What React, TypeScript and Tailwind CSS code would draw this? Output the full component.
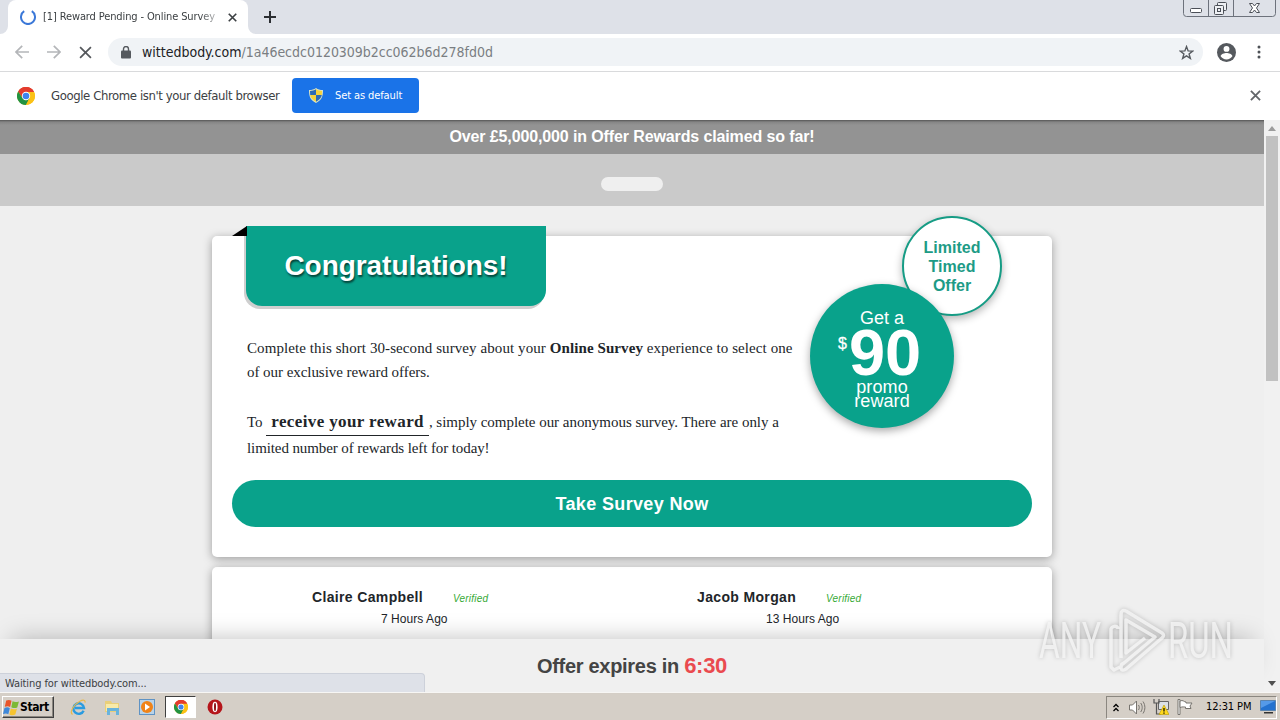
import type { ReactNode } from 'react';
import { clsx } from 'clsx';

const UI_FONT = "font-['DejaVu_Sans_Condensed','DejaVu_Sans',sans-serif] [font-stretch:condensed]";

function ChromeLogo({ size }: { size: number }) {
  return (
    <svg width={size} height={size} viewBox="0 0 24 24">
      <circle cx="12" cy="12" r="12" fill="#fbc116" />
      <path d="M12 12 1.6 6A12 12 0 0 1 22.4 6Z" fill="#e33b2e" />
      <path d="M12 6.5H22.7A12 12 0 0 0 1.6 6L7.2 14.7Z" fill="#e33b2e" />
      <path d="M1.6 6 7.2 14.8 12 17.5 16.8 14.8 12 24A12 12 0 0 1 1.6 6Z" fill="#229342" />
      <path d="M22.7 6.5H12L16.8 14.8 12 24A12 12 0 0 0 22.7 6.5Z" fill="#fbc116" />
      <circle cx="12" cy="12" r="5.6" fill="#fff" />
      <circle cx="12" cy="12" r="4.4" fill="#3f83ee" />
    </svg>
  );
}

function CloseIcon({ size, color, width = 2 }: { size: number; color: string; width?: number }) {
  return (
    <svg width={size} height={size} viewBox="0 0 12 12" fill="none" stroke={color} strokeWidth={width}>
      <path d="m1 1 10 10M11 1 1 11" />
    </svg>
  );
}

function TabStrip() {
  return (
    <div className="flex h-[34px] shrink-0 items-start bg-[#dee1e8]">
      <div className="relative ml-2 flex h-[34px] w-[240px] items-center rounded-t-lg bg-white pl-3">
        <svg className="absolute bottom-0 -left-2" width="8" height="8"><path d="M8 0v8H0a8 8 0 0 0 8-8Z" fill="#fff" /></svg>
        <svg className="absolute -right-2 bottom-0" width="8" height="8"><path d="M0 0v8h8a8 8 0 0 1-8-8Z" fill="#fff" /></svg>
        <svg width="16" height="16" viewBox="0 0 16 16" fill="none" stroke="#3b78d8" strokeWidth="2">
          <path d="M4.2 2.2A7 7 0 1 0 11.8 2.2" />
        </svg>
        <span className={clsx(UI_FONT, 'ml-[7px] w-[174px] overflow-hidden pt-px text-[11px] tracking-[-0.120px] whitespace-nowrap text-[#3c4043] [mask-image:linear-gradient(to_right,#000_90%,rgba(0,0,0,0.3))]')}>
          [1] Reward Pending - Online Survey
        </span>
        <span className="ml-[11px]"><CloseIcon size={9} color="#3c4043" width={2.2} /></span>
      </div>
      <svg className="mt-[11px] ml-4" width="12" height="12" stroke="#2b2e32" strokeWidth="2"><path d="M6 0v12M0 6h12" /></svg>
      <svg className="ml-auto mr-[4px]" width="93" height="17" fill="none" stroke="#6d727c">
        <path d="M.5 0v13.5a3 3 0 0 0 3 3h86a3 3 0 0 0 3-3V0" />
        <path d="M25.5 0v16M50.5 0v16" />
        <g stroke="#4b4f57">
          <rect x="7.5" y="8.5" width="11" height="4" rx="1" fill="#fff" />
          <rect x="34.5" y="2.5" width="9" height="8" rx="1" fill="#eef0f4" />
          <rect x="31.5" y="5.5" width="9" height="9" rx="1" fill="#eef0f4" />
          <rect x="34.5" y="8.5" width="3" height="3" />
          <path d="M66.5 3.5h3l2 2.500 2-2.500h3L73.500 8l3 4.500h-3l-2-2.500-2 2.500h-3l3-4.500Z" fill="#fff" />
        </g>
      </svg>
    </div>
  );
}

function Toolbar() {
  return (
    <div className="flex h-[38px] shrink-0 items-center border-b border-[#d9dadc] bg-white pb-px pl-[15px]">
      <svg width="14" height="14" viewBox="0 0 14 14" fill="none" stroke="#b4b6b9" strokeWidth="1.7"><path d="M14 7H1M7.200.8 1 7l6.200 6.200" /></svg>
      <svg className="ml-[18px]" width="14" height="14" viewBox="0 0 14 14" fill="none" stroke="#b4b6b9" strokeWidth="1.7"><path d="M0 7h13M6.800.8 13 7l-6.200 6.200" /></svg>
      <span className="ml-[18px]"><CloseIcon size={13} color="#55585c" width={1.6} /></span>
      <div className="ml-4 flex h-7 w-[1095px] items-center rounded-full bg-[#f0f3f6] pl-[13px]">
        <svg width="10" height="13" viewBox="0 0 10 13"><rect y="4.5" width="10" height="8" rx="1" fill="#55595e" /><path d="M2.500 5V3a2.500 2.500 0 0 1 5 0v2" fill="none" stroke="#55595e" strokeWidth="1.4" /></svg>
        <span className={clsx(UI_FONT, 'ml-[11px] text-sm whitespace-nowrap text-[#7a7e82]')}>
          <span className="text-[#202124]">wittedbody.com</span>
          <span className="tracking-[-0.020px]">/1a46ecdc0120309b2cc062b6d278fd0d</span>
        </span>
        <svg className="mr-[9px] ml-auto" width="15" height="15" viewBox="0 0 14 14" fill="none" stroke="#55595e" strokeWidth="1.3"><path d="m7 1.500 1.500 4 4.300.2-3.400 2.600 1.200 4.200L7 10.100l-3.600 2.400 1.200-4.200L1.200 5.700l4.300-.2Z" /></svg>
      </div>
      <svg className="ml-[14px]" width="19" height="19" viewBox="0 0 20 20">
        <circle cx="10" cy="10" r="10" fill="#55595e" />
        <circle cx="10" cy="6.200" r="3.100" fill="#fff" />
        <path d="M3.800 14c0-2.300 4.100-3.500 6.200-3.500s6.200 1.200 6.200 3.500A7.500 7.500 0 0 1 10 17.300 7.500 7.500 0 0 1 3.800 14Z" fill="#fff" />
      </svg>
      <svg className="ml-[21px]" width="4" height="14" fill="#4d5156"><circle cx="2" cy="2" r="1.5" /><circle cx="2" cy="7" r="1.5" /><circle cx="2" cy="12" r="1.5" /></svg>
    </div>
  );
}

function DefaultBrowserBar() {
  return (
    <div className={clsx(UI_FONT, 'flex h-12 shrink-0 items-center bg-white pr-[19px] pb-px pl-[17px]')}>
      <ChromeLogo size={18} />
      <span className="ml-4 w-[229px] text-[13px] tracking-[-0.400px] whitespace-nowrap text-[#3c4043]">Google Chrome isn't your default browser</span>
      <button className="ml-[12px] flex h-[35px] w-[127px] items-center rounded bg-[#1a73e8] pl-[17px] text-[11px] text-white">
        <svg width="14" height="15" viewBox="0 0 14 15">
          <path d="M7 0c2 1.400 4 2 7 2 0 6-1 10-7 13C1 12 0 8 0 2c3 0 5-.6 7-2Z" fill="#dbe4c4" />
          <path d="M7 1.300V7H1.200L1 3c2.400 0 4-.5 6-1.700Z" fill="#2d6bb5" />
          <path d="M7 1.300V7h5.800l.2-4c-2.400 0-4-.5-6-1.700Z" fill="#f6d33b" />
          <path d="M1.200 7H7v6.700C3.500 12 1.700 10 1.200 7Z" fill="#f6d33b" />
          <path d="M12.800 7H7v6.700c3.500-1.700 5.300-3.700 5.800-6.700Z" fill="#2d6bb5" />
        </svg>
        <span className="ml-[12px] pt-px tracking-[-0.100px] whitespace-nowrap">Set as default</span>
      </button>
      <span className="ml-auto"><CloseIcon size={11} color="#63666a" width={2} /></span>
    </div>
  );
}

function OfferCard() {
  return (
    <section className="relative mx-auto mt-[30px] h-[321px] w-[840px] shrink-0 rounded-[5px] bg-white shadow-[0_2px_10px_rgba(0,0,0,0.35)]">
      <div className="relative -top-[10px] ml-[34px] flex h-20 w-[300px] items-center justify-center rounded-b-2xl bg-[#09a28b] shadow-[-2px_3px_0_#cfcfcf]">
        <svg className="absolute top-0 -left-[14px]" width="15" height="10"><path d="M15 0v10H0Z" /></svg>
        <h1 className="text-[28px] font-bold tracking-[-0.050px] whitespace-nowrap text-white [text-shadow:1px_2px_2px_rgba(0,0,0,0.6)]">Congratulations!</h1>
      </div>

      <div className="absolute -top-5 left-[690px] flex size-[100px] items-center justify-center rounded-full border-2 border-[#169c85] bg-white text-center text-base leading-[19px] font-bold text-[#1d9b86] shadow-[0_3px_8px_rgba(0,0,0,0.3)]">
        Limited<br />Timed<br />Offer
      </div>
      <div className="absolute top-12 left-[598px] flex size-36 flex-col items-center rounded-full bg-[#09a28b] pt-[24px] text-lg text-white shadow-[0_3px_8px_rgba(0,0,0,0.35)]">
        <span className="leading-5">Get a</span>
        <span className="flex h-[52px] w-[88px] items-start">
          <span className="mt-[6px] text-base leading-5 [-webkit-text-stroke:0.300px_white]">$</span>
          <span className="ml-[2px] text-[65px] leading-[49px] font-bold">90</span>
        </span>
        <span className="text-center leading-[14px] tracking-[0.100px]">promo<br />reward</span>
      </div>

      <div className="mt-[20px] ml-[35px] font-['Liberation_Serif',serif] text-[15px] whitespace-nowrap text-[#212529]">
        <p className="leading-6 tracking-[0.085px]">Complete this short 30-second survey about your <b>Online Survey</b> experience to select one</p>
        <p className="leading-6 tracking-[-0.050px]">of our exclusive reward offers.</p>
        <p className="mt-[25px] leading-[26px] tracking-[-0.030px]">
          To <b className="inline-block border-b border-[#212529] px-[5px] text-[17px] tracking-[0.380px]">receive your reward</b>, simply complete our anonymous survey. There are only a
        </p>
        <p className="leading-6 tracking-[-0.100px]">limited number of rewards left for today!</p>
      </div>

      <button className="absolute top-[244px] left-5 h-[47px] w-[800px] rounded-full bg-[#09a28b] text-lg font-bold tracking-[0.350px] text-white">Take Survey Now</button>
    </section>
  );
}

function Comment({ name, ago }: { name: string; ago: string }) {
  return (
    <div className="flex w-[385px] shrink-0 flex-col">
      <div className="flex leading-5 whitespace-nowrap">
        <b className="text-sm leading-5 tracking-[0.350px]">{name}</b>
        <i className="ml-[30px] pt-[2px] text-[10px] tracking-[0.200px] text-[#35a935]">Verified</i>
      </div>
      <span className="ml-[69px] text-xs leading-5 tracking-[0.050px]">{ago}</span>
    </div>
  );
}

function Page() {
  return (
    <main className="flex w-[1264px] flex-col font-['Liberation_Sans',Arial,sans-serif]">
      <div className="flex min-h-0 flex-1 flex-col overflow-hidden bg-[#efefef]">
        <div className="h-[34px] shrink-0 bg-[#939393] bg-[linear-gradient(#555,#858585_2px,#939393_5px)] text-center text-base leading-[33px] font-bold tracking-[-0.120px] text-white">
          Over £5,000,000 in Offer Rewards claimed so far!
        </div>
        <div className="flex h-[52px] shrink-0 justify-center bg-[#cacaca] pt-[23px]">
          <div className="h-[14px] w-[62px] rounded-full bg-[#efefef]" />
        </div>
        <OfferCard />
        <section className="mx-auto mt-[10px] flex h-[120px] w-[840px] shrink-0 rounded-[5px] bg-white pt-5 pl-[100px] text-[#212529] shadow-[0_2px_10px_rgba(0,0,0,0.35)]">
          <Comment name="Claire Campbell" ago="7 Hours Ago" />
          <Comment name="Jacob Morgan" ago="13 Hours Ago" />
        </section>
      </div>
      <div className="relative h-[53px] shrink-0 bg-[#f0f0f0] text-center text-xl leading-[53px] font-bold tracking-[-0.300px] text-[#444] shadow-[0_-12px_24px_-12px_rgba(0,0,0,0.25)]">
        Offer expires in <span className="text-[22px] text-[#ea4a4f]">6:30</span>
        <div className={clsx(UI_FONT, 'absolute bottom-0 left-0 h-[19px] w-[425px] rounded-tr border-t border-r border-[#cdd1da] bg-[#dee1e8] pl-[5px] text-left text-[11px] leading-[19px] font-normal tracking-[-0.100px] text-[#3c4043]')}>
          Waiting for wittedbody.com...
        </div>
      </div>
    </main>
  );
}

function ScrollBar() {
  return (
    <div className="flex w-4 flex-col items-center bg-[#f1f1f1] pt-[6px]">
      <svg width="8" height="5"><path d="m4 0 4 5H0Z" fill="#9c9c9c" /></svg>
      <div className="mt-[5px] h-[245px] w-3 bg-[#c1c1c1]" />
      <svg className="mt-auto mb-[6px]" width="8" height="5"><path d="M0 0h8L4 5Z" fill="#505050" /></svg>
    </div>
  );
}

function TaskIcon({ active, children }: { active?: boolean; children: ReactNode }) {
  return (
    <div className={clsx('flex h-[22px] w-[31px] items-center justify-center', active && 'border border-t-[#404040] border-r-white border-b-white border-l-[#404040] bg-white')}>
      {children}
    </div>
  );
}

function TaskBar() {
  return (
    <footer className={clsx(UI_FONT, 'flex h-7 shrink-0 items-center border-t border-[#f8f7f5] bg-[#d5cfc7] pt-px pl-[2px]')}>
      <button className="flex h-[22px] w-[52px] items-center border border-t-white border-r-[#404040] border-b-[#404040] border-l-white text-xs font-bold tracking-[-0.400px] text-black shadow-[inset_-1px_-1px_0_#8b8780]">
        <svg width="17" height="17" viewBox="0 0 16 16">
          <path d="M3 1.500c2-1 3.500-.8 5 .2L6.700 7.500c-1.500-1-3-1-5-.1Z" fill="#e8552b" />
          <path d="M9 2.200c2 1 3.700.9 6 .1l-1.600 5.600c-2 .9-3.600.8-5.600-.2Z" fill="#7db936" />
          <path d="M1.400 8.400c2-.9 3.500-.8 5 .2L5 14.300c-1.500-1-3-1-5-.1Z" fill="#3f88d9" />
          <path d="M7.400 9c2 1 3.700.9 5.700.1l-1.500 5.600c-2 .9-3.600.8-5.600-.2Z" fill="#f6c431" />
        </svg>
        <span>Start</span>
      </button>
      <div className="ml-[9px] flex gap-[3px]">
        <TaskIcon>
          <svg width="17" height="17" viewBox="0 0 17 17" fill="none">
            <path d="M13.600 11.700a5.300 5.300 0 1 1 .4-2.700H5" stroke="#2a9be0" strokeWidth="2.4" />
            <path d="M2.500 15.500C-1 13 4 5.500 9.500 2.500c4-2.200 6-1.500 5.500 1.200" stroke="#e9b949" strokeWidth="1.2" />
          </svg>
        </TaskIcon>
        <TaskIcon>
          <svg width="17" height="17" viewBox="0 0 17 17">
            <path d="M1 2h6l1 2h7v9H1Z" fill="#e9cf7a" /><path d="M2 5h12v7H2Z" fill="#f8eaa9" />
            <path d="M3 16V9h12v7h-3v-4H6v4Z" fill="#69b3dc" />
          </svg>
        </TaskIcon>
        <TaskIcon>
          <svg width="16" height="16" viewBox="0 0 16 16">
            <rect x=".5" y=".5" width="15" height="15" fill="#b9d3e8" stroke="#5f93c4" />
            <circle cx="8" cy="8" r="6" fill="#f08317" /><path d="m6 4.500 5 3.500-5 3.500Z" fill="#fff" />
          </svg>
        </TaskIcon>
        <TaskIcon active><ChromeLogo size={14} /></TaskIcon>
        <TaskIcon>
          <svg width="16" height="16" viewBox="0 0 16 16">
            <circle cx="8" cy="8" r="7.500" fill="#b5151a" /><ellipse cx="8" cy="8" rx="2.600" ry="5.200" fill="#fff" /><ellipse cx="8" cy="8" rx="1" ry="4.200" fill="#8d1014" />
          </svg>
        </TaskIcon>
      </div>
      <div className="mr-[3px] ml-auto flex h-[23px] w-[171px] items-center border border-t-[#8b8780] border-r-white border-b-white border-l-[#8b8780] pl-[6px] text-[11px] text-black">
        <svg width="6" height="9" fill="none" stroke="#000" strokeWidth="1.3"><path d="m.5 4 2.500-2.500L5.500 4M.5 8 3 5.500 5.500 8" /></svg>
        <svg className="ml-[10px]" width="17" height="15" viewBox="0 0 17 15" fill="none" stroke="#77746f">
          <path d="M.5 5h3l4-4v13l-4-4h-3Z" fill="#fff" /><path d="M9.500 5c1 1.500 1 3.500 0 5M11.700 3c2 2.700 2 6.300 0 9M14 1.500c2.500 3.700 2.500 8.300 0 12" />
        </svg>
        <svg className="ml-[7px]" width="16" height="16" viewBox="0 0 16 16">
          <path d="M5.500 2.500h10v8h-10Z" fill="#dce1e6" stroke="#666" /><path d="M1 0v4h5V0M3.500 4v11H8" fill="none" stroke="#555" strokeWidth="1.2" />
          <path d="m11 6 5 9.500H6Z" fill="#ffd91c" stroke="#b99a00" strokeWidth=".6" /><path d="M11 9v3.500M11 13.500v1.200" stroke="#000" strokeWidth="1.2" />
        </svg>
        <svg className="ml-[8px]" width="17" height="16" viewBox="0 0 17 16" fill="#fff" stroke="#77746f"><path d="M1 .5h2v15H1Z" /><path d="M3 2c3-1.500 4 1 6 1v1h6l-2 3 1 2.500H8.500V8C7 8 6 7.500 3 8.500Z" /></svg>
        <span className="ml-[12px] w-[46px] pt-px tracking-[-0.100px] whitespace-nowrap">12:31 PM</span>
        <svg className="ml-[8px]" width="16" height="14" viewBox="0 0 16 14"><path d="M.5.5h15v10H.5Z" fill="#2472cf" stroke="#5a83ae" /><path d="M1 1h14L1 8Z" fill="#559ae8" /><path d="M4 12h9v1.500H4Z" fill="#333" /></svg>
      </div>
    </footer>
  );
}

function Watermark() {
  return (
    <svg className="pointer-events-none absolute top-[604px] left-[1034px] [filter:drop-shadow(0_0_2px_rgba(0,0,0,0.25))]" width="210" height="74" fill="none">
      <g fill="#f6f6f6" fillOpacity=".8" fontFamily="Roboto, sans-serif" fontSize="50" fontWeight="400">
        <text x="5" y="54" textLength="62" lengthAdjust="spacingAndGlyphs">ANY</text>
        <text x="134" y="54" textLength="65" lengthAdjust="spacingAndGlyphs">RUN</text>
      </g>
      <g stroke="#f6f6f6" strokeOpacity=".8" strokeWidth="3.5" strokeLinejoin="round">
        <path d="M84 25v-1a4 4 0 0 0-7 1v38l3 3 6-3" />
        <path d="M87 54V11q0-6 5-4l36 22q3 2 0 5L92 65q-5 3-5-2 0-3 3-4l31-26-29-17v33l19-15" />
      </g>
    </svg>
  );
}

export default function App() {
  return (
    <div className="relative flex h-[720px] w-[1280px] flex-col overflow-hidden bg-white">
      <TabStrip />
      <Toolbar />
      <DefaultBrowserBar />
      <div className="flex min-h-0 flex-1">
        <Page />
        <ScrollBar />
      </div>
      <TaskBar />
      <Watermark />
    </div>
  );
}
